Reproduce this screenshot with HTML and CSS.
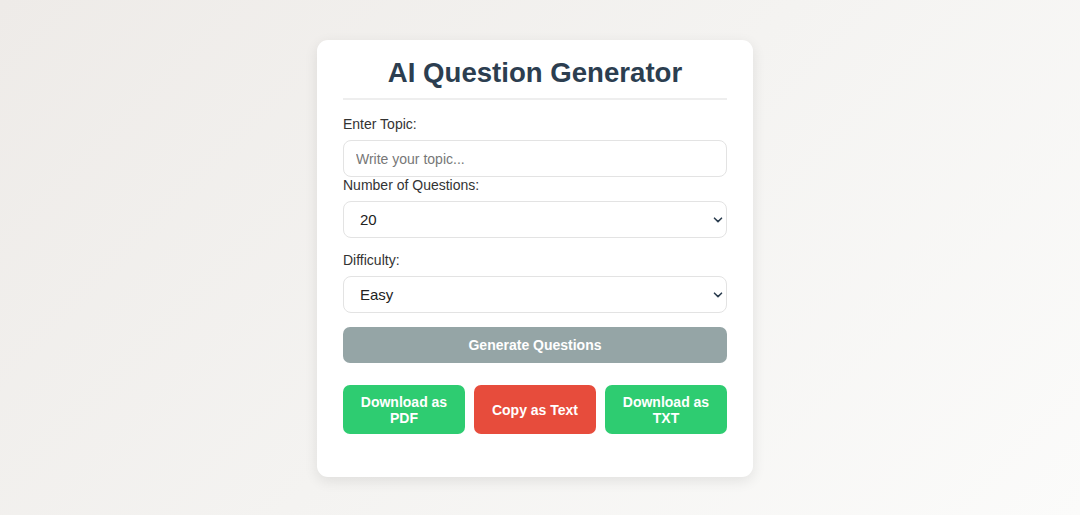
FILE: index.html
```html
<!DOCTYPE html>
<html lang="en">
<head>
<meta charset="utf-8">
<title>AI Question Generator</title>
<link rel="stylesheet" href="styles.css">
</head>
<body>
<div class="card">
  <h1 class="title">AI Question Generator</h1>
  <label class="label" for="topic">Enter Topic:</label>
  <input class="field" id="topic" type="text" placeholder="Write your topic...">
  <label class="label" for="count">Number of Questions:</label>
  <div class="select-wrap">
    <select class="field select" id="count">
      <option>20</option>
    </select>
    <svg class="chevron" width="10" height="6" viewBox="0 0 10 6" aria-hidden="true"><path d="M1.5 1.2 L5 4.6 L8.5 1.2" fill="none" stroke="#2c3e50" stroke-width="1.6" stroke-linecap="round" stroke-linejoin="round"/></svg>
  </div>
  <label class="label" for="diff">Difficulty:</label>
  <div class="select-wrap">
    <select class="field select" id="diff">
      <option>Easy</option>
    </select>
    <svg class="chevron" width="10" height="6" viewBox="0 0 10 6" aria-hidden="true"><path d="M1.5 1.2 L5 4.6 L8.5 1.2" fill="none" stroke="#2c3e50" stroke-width="1.6" stroke-linecap="round" stroke-linejoin="round"/></svg>
  </div>
  <button class="btn btn-generate">Generate Questions</button>
  <div class="actions">
    <button class="btn btn-green">Download as PDF</button>
    <button class="btn btn-red">Copy as Text</button>
    <button class="btn btn-green">Download as TXT</button>
  </div>
  <div class="output"></div>
</div>
</body>
</html>
```
FILE: styles.css
```css
html, body {
  height: 100%;
}
body {
  margin: 0;
  padding: 40px 10px 0 0;
  box-sizing: border-box;
  display: flex;
  justify-content: center;
  align-items: flex-start;
  font-family: "Liberation Sans", Arial, sans-serif;
  background: linear-gradient(135deg, #eeebe8 0%, #f4f3f1 50%, #fbfbfa 100%);
}
.card {
  width: 436px;
  box-sizing: border-box;
  background: #fff;
  border-radius: 11px;
  padding: 17px 26px 25px;
  box-shadow: 0 4px 14px rgba(0, 0, 0, 0.09);
  display: flex;
  flex-direction: column;
}
.title {
  margin: 0 0 16px;
  padding-bottom: 9px;
  border-bottom: 2px solid #eeeeee;
  text-align: center;
  font-size: 27.6px;
  font-weight: bold;
  color: #2c3e50;
  line-height: 32px;
}
.label {
  display: block;
  font-size: 14px;
  line-height: 16px;
  color: #333;
  margin-bottom: 8px;
}
.field {
  display: block;
  width: 100%;
  box-sizing: border-box;
  height: 37px;
  padding: 0 12px;
  border: 1px solid #e3e3e3;
  border-radius: 8px;
  font-family: "Liberation Sans", Arial, sans-serif;
  font-size: 14px;
  color: #222;
  background: #fff;
  outline: none;
}
.field::placeholder {
  color: #777;
}
.select-wrap {
  position: relative;
  margin-bottom: 14px;
}
.select {
  appearance: none;
  -webkit-appearance: none;
  padding-left: 16px;
  font-size: 15px;
}
.chevron {
  position: absolute;
  right: 4px;
  top: 16px;
  pointer-events: none;
}
.btn {
  border: none;
  border-radius: 7px;
  color: #fff;
  font-family: "Liberation Sans", Arial, sans-serif;
  font-size: 14px;
  font-weight: bold;
  line-height: 16px;
  cursor: pointer;
}
.btn-generate {
  width: 100%;
  padding: 10px;
  background: #95a5a6;
}
.actions {
  display: flex;
  gap: 9px;
  margin-top: 22px;
}
.actions .btn {
  flex: 1;
  padding: 8.5px 10px;
}
.btn-green {
  background: #2ecc71;
}
.btn-red {
  background: #e74c3c;
}
.output {
  margin-top: 18px;
}
```
